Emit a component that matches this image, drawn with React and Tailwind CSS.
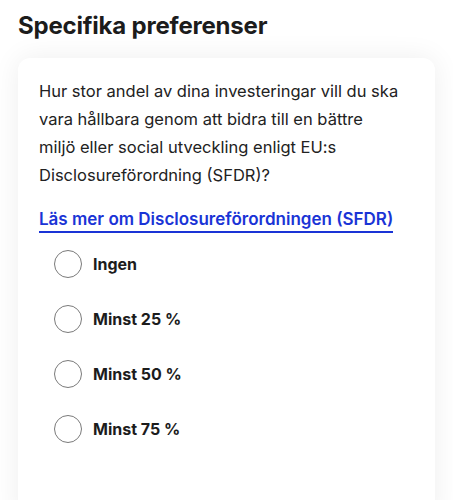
import React, { useState } from 'react';

const options = ['Ingen', 'Minst 25 %', 'Minst 50 %', 'Minst 75 %'];

const App = () => {
  const [selected, setSelected] = useState(null);

  return (
    <div className="min-h-screen bg-white px-[18px] pt-[8px] font-['Inter',sans-serif] text-[#1c1c1c]">
      <h1 className="text-[24px] font-bold leading-[36px] tracking-[-0.2px] mb-[14px]">Specifika preferenser</h1>

      <div className="bg-white rounded-[12px] shadow-[0_0_28px_rgba(0,0,0,0.07)] px-[21px] pt-[19px] pb-[80px]">
        <p className="text-[16.5px] leading-[28px] text-[#222]">
          Hur stor andel av dina investeringar vill du ska vara hållbara genom att bidra till en bättre
          <br />
          miljö eller social utveckling enligt EU:s Disclosureförordning (SFDR)?
        </p>

        <a href="#" className="inline-block mt-[18px] text-[17px] font-semibold text-[#1a34d6] leading-[24px] border-b-2 border-[#1a34d6]">
          Läs mer om Disclosureförordningen (SFDR)
        </a>

        <div className="flex flex-col gap-[27px] mt-[17px] pl-[15px]">
          {options.map((opt) => (
            <label key={opt} className="flex items-center gap-[11px] cursor-pointer" onClick={() => setSelected(opt)}>
              <span className="w-[28px] h-[28px] rounded-full border border-[#7a7a7a] flex items-center justify-center">
                {selected === opt && <span className="w-[14px] h-[14px] rounded-full bg-[#1a34d6]" />}
              </span>
              <span className="text-[16px] font-bold leading-[28px]">{opt}</span>
            </label>
          ))}
        </div>
      </div>
    </div>
  );
};

export default App;
